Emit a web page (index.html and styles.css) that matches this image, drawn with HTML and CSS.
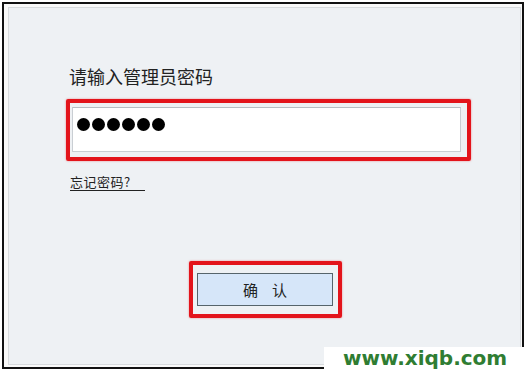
FILE: index.html
```html
<!DOCTYPE html>
<html lang="zh">
<head>
<meta charset="utf-8">
<title>登录</title>
<link rel="stylesheet" href="styles.css">
</head>
<body>
<div class="frame">
  <div class="panel">
    <div class="form">
      <div class="title">请输入管理员密码</div>
      <div class="hl hl-input">
        <div class="input">
          <span class="dot"></span><span class="dot"></span><span class="dot"></span><span class="dot"></span><span class="dot"></span><span class="dot"></span>
        </div>
      </div>
      <div class="forgot"><span class="link">忘记密码?</span></div>
    </div>
    <div class="btn-row">
      <div class="hl hl-btn">
        <div class="btn"><span>确</span><span>认</span></div>
      </div>
    </div>
  </div>
</div>
<div class="watermark">www.xiqb.com</div>
</body>
</html>
```
FILE: styles.css
```css
html, body {
  margin: 0;
  padding: 0;
  width: 526px;
  height: 370px;
  overflow: hidden;
  background: #ffffff;
  font-family: "Noto Sans CJK SC", "Liberation Sans", sans-serif;
}
* { box-sizing: border-box; }

.frame {
  margin: 2px 0 0 2px;
  width: 522px;
  height: 367px;
  border: 2px solid #111;
  padding: 3px 1px 2px 4px;
  background: #f9f9f9;
}

.panel {
  height: 100%;
  border: 1px solid #d8dbde;
  background: #eef1f4;
  padding-top: 57px;
}

.form {
  padding-left: 57px;
}

.title {
  font-size: 18px;
  line-height: 22px;
  color: #222;
  margin-left: 3px;
}

.hl {
  border: 4px solid #e3141b;
  border-radius: 2px;
  box-shadow: 0 0 2px rgba(227, 20, 27, 0.5);
}

.hl-input {
  margin-top: 12px;
  width: 405px;
  height: 62px;
  padding: 4px 6px 5px 2px;
}

.input {
  height: 45px;
  background: #ffffff;
  border: 1px solid #c9ced3;
  border-top-color: #b8bdc2;
  display: flex;
  align-items: flex-start;
  gap: 2px;
  padding: 10px 0 0 4px;
}

.dot {
  width: 13px;
  height: 13px;
  border-radius: 50%;
  background: #000;
}

.forgot {
  margin-top: 13px;
  margin-left: 4px;
  font-size: 13px;
  line-height: 16px;
  color: #222;
}

.link {
  display: inline-block;
  border-bottom: 1px solid #222;
  padding-right: 14px;
  letter-spacing: 0.5px;
  line-height: 16px;
}

.btn-row {
  display: flex;
  justify-content: center;
  margin-top: 70px;
  padding-left: 2px;
}

.hl-btn {
  width: 153px;
  height: 57px;
  padding: 8px 5px 8px 4px;
}

.btn {
  height: 33px;
  background: #d6e6f9;
  border: 1px solid #56646b;
  display: flex;
  align-items: center;
  justify-content: center;
  gap: 14px;
  font-size: 15px;
  color: #222;
}

.watermark {
  position: absolute;
  left: 324px;
  top: 347px;
  width: 202px;
  height: 23px;
  background: #ffffff;
  color: #2f7d32;
  font-family: "DejaVu Sans", sans-serif;
  font-weight: bold;
  font-size: 20px;
  line-height: 23px;
  padding-left: 19px;
}
```
